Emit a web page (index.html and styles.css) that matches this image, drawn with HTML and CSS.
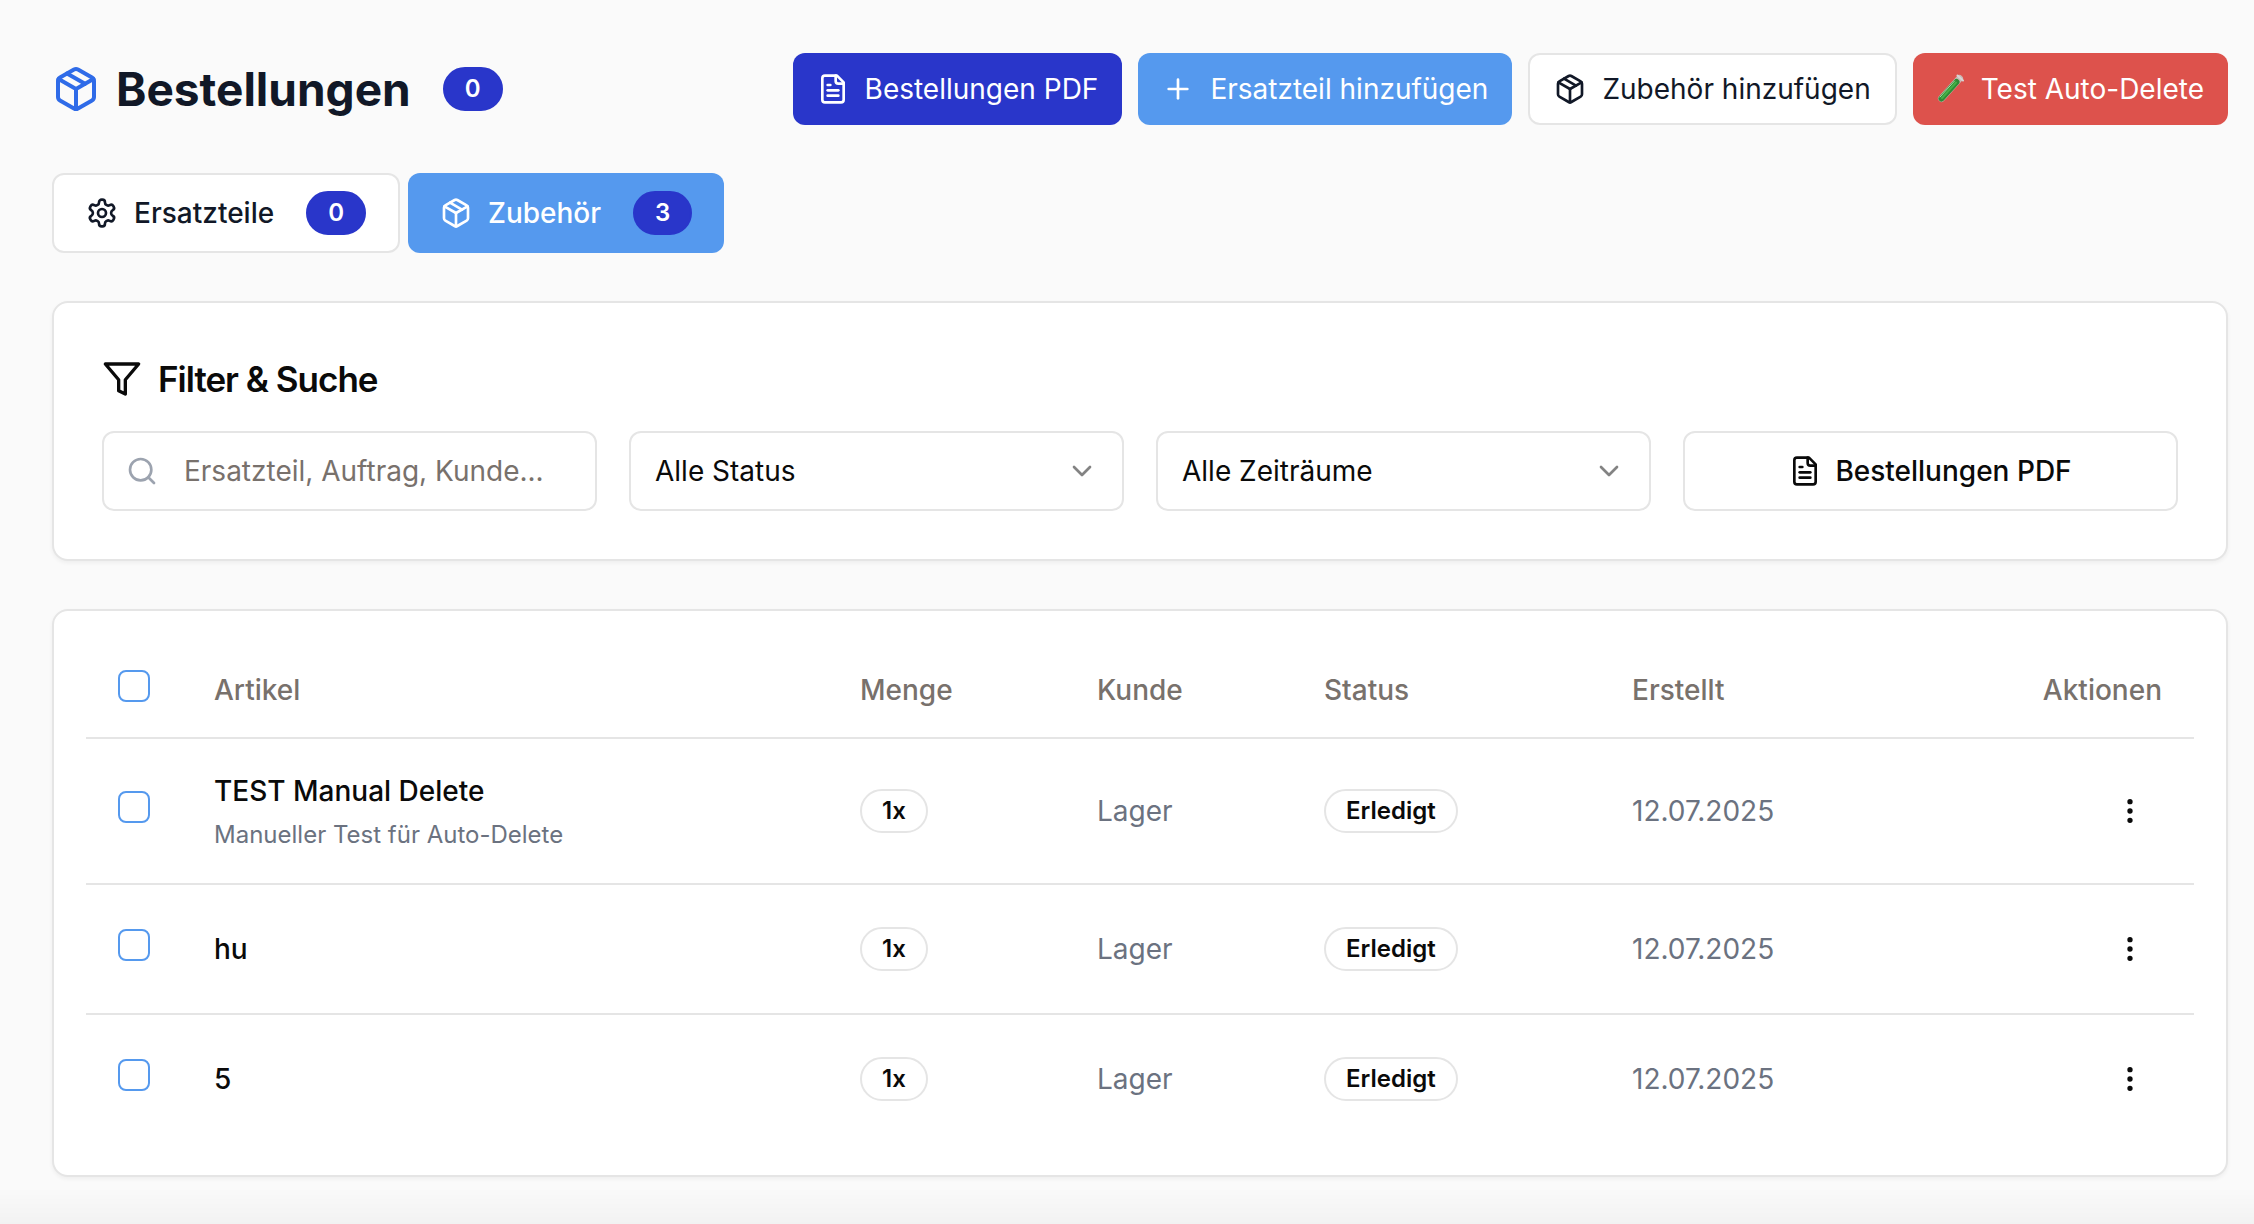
FILE: index.html
```html
<!DOCTYPE html>
<html lang="de">
<head>
<meta charset="utf-8">
<meta name="viewport" content="width=device-width, initial-scale=1">
<title>Bestellungen</title>
<link rel="stylesheet" href="styles.css">
</head>
<body>
<svg class="sprite" aria-hidden="true">
  <symbol id="package" viewBox="0 0 24 24"><path d="m7.5 4.27 9 5.15"/><path d="M21 8a2 2 0 0 0-1-1.73l-7-4a2 2 0 0 0-2 0l-7 4A2 2 0 0 0 3 8v8a2 2 0 0 0 1 1.73l7 4a2 2 0 0 0 2 0l7-4A2 2 0 0 0 21 16Z"/><path d="m3.3 7 8.7 5 8.7-5"/><path d="M12 22V12"/></symbol>
  <symbol id="file-text" viewBox="0 0 24 24"><path d="M15 2H6a2 2 0 0 0-2 2v16a2 2 0 0 0 2 2h12a2 2 0 0 0 2-2V7Z"/><path d="M14 2v4a2 2 0 0 0 2 2h4"/><path d="M10 9H8"/><path d="M16 13H8"/><path d="M16 17H8"/></symbol>
  <symbol id="plus" viewBox="0 0 24 24"><path d="M5 12h14"/><path d="M12 5v14"/></symbol>
  <symbol id="settings" viewBox="0 0 24 24"><path d="M12.22 2h-.44a2 2 0 0 0-2 2v.18a2 2 0 0 1-1 1.73l-.43.25a2 2 0 0 1-2 0l-.15-.08a2 2 0 0 0-2.73.73l-.22.38a2 2 0 0 0 .73 2.73l.15.1a2 2 0 0 1 1 1.72v.51a2 2 0 0 1-1 1.74l-.15.09a2 2 0 0 0-.73 2.73l.22.38a2 2 0 0 0 2.73.73l.15-.08a2 2 0 0 1 2 0l.43.25a2 2 0 0 1 1 1.73V20a2 2 0 0 0 2 2h.44a2 2 0 0 0 2-2v-.18a2 2 0 0 1 1-1.73l.43-.25a2 2 0 0 1 2 0l.15.08a2 2 0 0 0 2.73-.73l.22-.39a2 2 0 0 0-.73-2.73l-.15-.08a2 2 0 0 1-1-1.74v-.5a2 2 0 0 1 1-1.74l.15-.09a2 2 0 0 0 .73-2.73l-.22-.38a2 2 0 0 0-2.73-.73l-.15.08a2 2 0 0 1-2 0l-.43-.25a2 2 0 0 1-1-1.73V4a2 2 0 0 0-2-2z"/><circle cx="12" cy="12" r="3"/></symbol>
  <symbol id="filter" viewBox="0 0 24 24"><path d="M22 3H2l8 9.46V19l4 2v-8.54L22 3z"/></symbol>
  <symbol id="search" viewBox="0 0 24 24"><circle cx="11" cy="11" r="8"/><path d="m21 21-4.3-4.3"/></symbol>
  <symbol id="chevron" viewBox="0 0 24 24"><path d="m6 9 6 6 6-6"/></symbol>
  <symbol id="more" viewBox="0 0 24 24"><circle cx="12" cy="12" r="1"/><circle cx="12" cy="5" r="1"/><circle cx="12" cy="19" r="1"/></symbol>
</svg>

<main class="page">
  <header class="page-header">
    <div class="title-group">
      <svg class="icon icon-brand"><use href="#package"/></svg>
      <h1 class="page-title">Bestellungen</h1>
      <span class="badge badge-solid badge-title">0</span>
    </div>
    <div class="actions">
      <button type="button" class="btn btn-indigo"><svg class="icon"><use href="#file-text"/></svg>Bestellungen PDF</button>
      <button type="button" class="btn btn-sky"><svg class="icon"><use href="#plus"/></svg>Ersatzteil hinzufügen</button>
      <button type="button" class="btn btn-outline"><svg class="icon"><use href="#package"/></svg>Zubehör hinzufügen</button>
      <button type="button" class="btn btn-danger">
        <svg class="tube" viewBox="0 0 28 32" aria-hidden="true">
          <path d="M4.500 25.500 22.500 5.500" stroke="#c9b9b4" stroke-width="7" stroke-linecap="round"/>
          <path d="M4.500 25.500 19.500 9" stroke="#2f8a35" stroke-width="6" stroke-linecap="round"/>
          <path d="M5 25 19 9.500" stroke="#45b046" stroke-width="2" stroke-linecap="round"/>
          <path d="M3 24 17.500 8" stroke="#a9dba6" stroke-width="1" stroke-linecap="round"/>
          <path d="M20.500 2.500 26 7.500" stroke="#d9d4d4" stroke-width="2" stroke-linecap="round"/>
        </svg>Test Auto-Delete</button>
    </div>
  </header>

  <nav class="tabs" aria-label="Bereiche">
    <button type="button" class="tab tab-outline"><svg class="icon"><use href="#settings"/></svg>Ersatzteile<span class="badge badge-solid">0</span></button>
    <button type="button" class="tab tab-active" aria-current="page"><svg class="icon"><use href="#package"/></svg>Zubehör<span class="badge badge-solid">3</span></button>
  </nav>

  <section class="card filter-card">
    <h2 class="card-title"><svg class="icon icon-filter"><use href="#filter"/></svg>Filter &amp; Suche</h2>
    <div class="filters">
      <div class="field">
        <svg class="icon field-search"><use href="#search"/></svg>
        <input type="search" class="control control-search" placeholder="Ersatzteil, Auftrag, Kunde..." aria-label="Suche">
      </div>
      <div class="field">
        <select class="control" aria-label="Status"><option>Alle Status</option></select>
        <svg class="icon field-chevron"><use href="#chevron"/></svg>
      </div>
      <div class="field">
        <select class="control" aria-label="Zeitraum"><option>Alle Zeiträume</option></select>
        <svg class="icon field-chevron"><use href="#chevron"/></svg>
      </div>
      <button type="button" class="control control-button"><svg class="icon"><use href="#file-text"/></svg>Bestellungen PDF</button>
    </div>
  </section>

  <section class="card table-card">
    <table class="orders">
      <colgroup><col class="col-check"><col><col class="col-amount"><col class="col-customer"><col class="col-status"><col class="col-created"><col class="col-actions"></colgroup>
      <thead>
        <tr>
          <th class="cell-check"><input type="checkbox" class="check" aria-label="Alle auswählen"></th>
          <th>Artikel</th><th>Menge</th><th>Kunde</th><th>Status</th><th>Erstellt</th><th class="cell-actions">Aktionen</th>
        </tr>
      </thead>
      <tbody>
        <tr>
          <td class="cell-check"><input type="checkbox" class="check" aria-label="TEST Manual Delete auswählen"></td>
          <td><div class="item-name">TEST Manual Delete</div><div class="item-note">Manueller Test für Auto-Delete</div></td>
          <td><span class="badge badge-outline">1x</span></td>
          <td class="muted">Lager</td>
          <td><span class="badge badge-outline">Erledigt</span></td>
          <td class="muted">12.07.2025</td>
          <td class="cell-actions"><button type="button" class="menu-btn" aria-label="Aktionen"><svg class="icon"><use href="#more"/></svg></button></td>
        </tr>
        <tr>
          <td class="cell-check"><input type="checkbox" class="check" aria-label="hu auswählen"></td>
          <td><div class="item-name">hu</div></td>
          <td><span class="badge badge-outline">1x</span></td>
          <td class="muted">Lager</td>
          <td><span class="badge badge-outline">Erledigt</span></td>
          <td class="muted">12.07.2025</td>
          <td class="cell-actions"><button type="button" class="menu-btn" aria-label="Aktionen"><svg class="icon"><use href="#more"/></svg></button></td>
        </tr>
        <tr>
          <td class="cell-check"><input type="checkbox" class="check" aria-label="5 auswählen"></td>
          <td><div class="item-name">5</div></td>
          <td><span class="badge badge-outline">1x</span></td>
          <td class="muted">Lager</td>
          <td><span class="badge badge-outline">Erledigt</span></td>
          <td class="muted">12.07.2025</td>
          <td class="cell-actions"><button type="button" class="menu-btn" aria-label="Aktionen"><svg class="icon"><use href="#more"/></svg></button></td>
        </tr>
      </tbody>
    </table>
  </section>
</main>
<div class="bottom-fade" aria-hidden="true"></div>
</body>
</html>
```
FILE: styles.css
```css
*, *::before, *::after { box-sizing: border-box; }

:root {
  --line: #e5e5e5;
  --ink: #0a0a0a;
  --navy: #111827;
  --indigo: #2936ca;
  --sky: #5599ee;
}

body {
  margin: 0;
  background: #fafafa;
  color: var(--ink);
  font-family: Inter, "Liberation Sans", sans-serif;
  font-size: 28px;
  line-height: 40px;
}

button, input, select { font: inherit; color: inherit; }
button { cursor: pointer; }

.sprite { display: none; }

.icon {
  width: 32px;
  height: 32px;
  flex: none;
  fill: none;
  stroke: currentColor;
  stroke-width: 2;
  stroke-linecap: round;
  stroke-linejoin: round;
}

.page {
  display: flex;
  flex-direction: column;
  gap: 48px;
  padding: 53px 26px 46px 52px;
}

.page-header {
  display: flex;
  flex-wrap: wrap;
  align-items: center;
  justify-content: space-between;
  gap: 24px;
}

.title-group { display: flex; align-items: center; gap: 16px; }
.icon-brand { width: 48px; height: 48px; color: #2f6be8; }
.page-title { margin: 0; font-size: 46px; line-height: 64px; font-weight: 700; color: var(--navy); }
.badge-title { margin-left: 16px; }

.badge {
  display: inline-flex;
  align-items: center;
  height: 44px;
  padding: 0 20px;
  border: 2px solid transparent;
  border-radius: 22px;
  font-size: 24px;
  line-height: 32px;
  font-weight: 600;
  vertical-align: middle;
}
.badge-solid { background: var(--indigo); border-color: var(--indigo); color: #fff; }
.badge-outline { border-color: var(--line); }

.actions { display: flex; flex-wrap: wrap; gap: 16px; }

.btn {
  display: inline-flex;
  align-items: center;
  gap: 16px;
  height: 72px;
  padding: 0 24px;
  border: 0;
  border-radius: 12px;
  font-weight: 400;
  color: #fff;
  white-space: nowrap;
}
.btn-indigo { background: var(--indigo); }
.btn-sky { background: var(--sky); }
.btn-outline { background: #fff; border: 2px solid var(--line); color: var(--navy); }
.btn-danger { background: #dd524c; }
.tube { width: 28px; height: 32px; flex: none; fill: none; }

.tabs { display: flex; gap: 8px; }
.tab {
  display: inline-flex;
  align-items: center;
  gap: 16px;
  height: 80px;
  padding: 0 32px;
  border: 0;
  border-radius: 12px;
  font-weight: 500;
}
.tab .badge { margin-left: 16px; }
.tab-outline { background: #fff; border: 2px solid var(--line); color: var(--navy); }
.tab-active { background: var(--sky); color: #fff; }

.card {
  background: #fff;
  border: 2px solid var(--line);
  border-radius: 16px;
  box-shadow: 0 2px 4px rgba(0, 0, 0, 0.05);
}
.filter-card { display: flex; flex-direction: column; gap: 24px; padding: 48px; }
.card-title {
  display: flex;
  align-items: center;
  gap: 16px;
  margin: 0;
  font-size: 35px;
  line-height: 56px;
  font-weight: 600;
  letter-spacing: -1px;
}
.icon-filter { width: 40px; height: 40px; }

.filters { display: grid; grid-template-columns: repeat(4, 1fr); gap: 32px; }
.field { position: relative; display: flex; align-items: center; }
.control {
  width: 100%;
  min-width: 0;
  height: 80px;
  padding: 0 24px;
  border: 2px solid var(--line);
  border-radius: 12px;
  background: #fff;
  appearance: none;
}
.control-search { padding-left: 80px; }
.control-search::placeholder { color: #78716c; opacity: 1; }
.control-button {
  display: flex;
  align-items: center;
  justify-content: center;
  gap: 14px;
  font-weight: 500;
}
.field-search { position: absolute; left: 24px; color: #9ca3af; }
.field-chevron { position: absolute; right: 26px; opacity: 0.5; pointer-events: none; }

.table-card { padding: 32px; }
.orders { width: 100%; border-collapse: separate; border-spacing: 0; table-layout: fixed; }
.col-check { width: 96px; }
.col-amount { width: 237px; }
.col-customer { width: 227px; }
.col-status { width: 308px; }
.col-created { width: 296px; }
.col-actions { width: 298px; }

.orders th, .orders td {
  padding: 0 32px;
  border-bottom: 2px solid var(--line);
  text-align: left;
  vertical-align: middle;
}
.orders th { height: 96px; font-weight: 500; color: #78716c; }
.orders td { padding-top: 32px; padding-bottom: 32px; }
.orders tbody tr:last-child td { border-bottom: 0; }
.orders .cell-check { padding-top: 0; padding-bottom: 8px; }
.orders .cell-actions { text-align: right; }

.check {
  display: block;
  width: 32px;
  height: 32px;
  margin: 0;
  border: 2px solid var(--sky);
  border-radius: 8px;
  background: #fff;
  appearance: none;
}
.check:checked { background: var(--sky); }

.item-name { font-weight: 500; }
.item-note { margin-top: 8px; font-size: 24px; line-height: 32px; color: #6b7280; }
.muted { color: #6b7280; }

.menu-btn {
  display: inline-flex;
  align-items: center;
  justify-content: center;
  width: 64px;
  height: 64px;
  padding: 0;
  border: 0;
  background: none;
  vertical-align: middle;
}

.bottom-fade {
  position: fixed;
  inset: auto 0 0 0;
  height: 36px;
  background: linear-gradient(rgba(0, 0, 0, 0), rgba(0, 0, 0, 0.03));
  pointer-events: none;
}
```
